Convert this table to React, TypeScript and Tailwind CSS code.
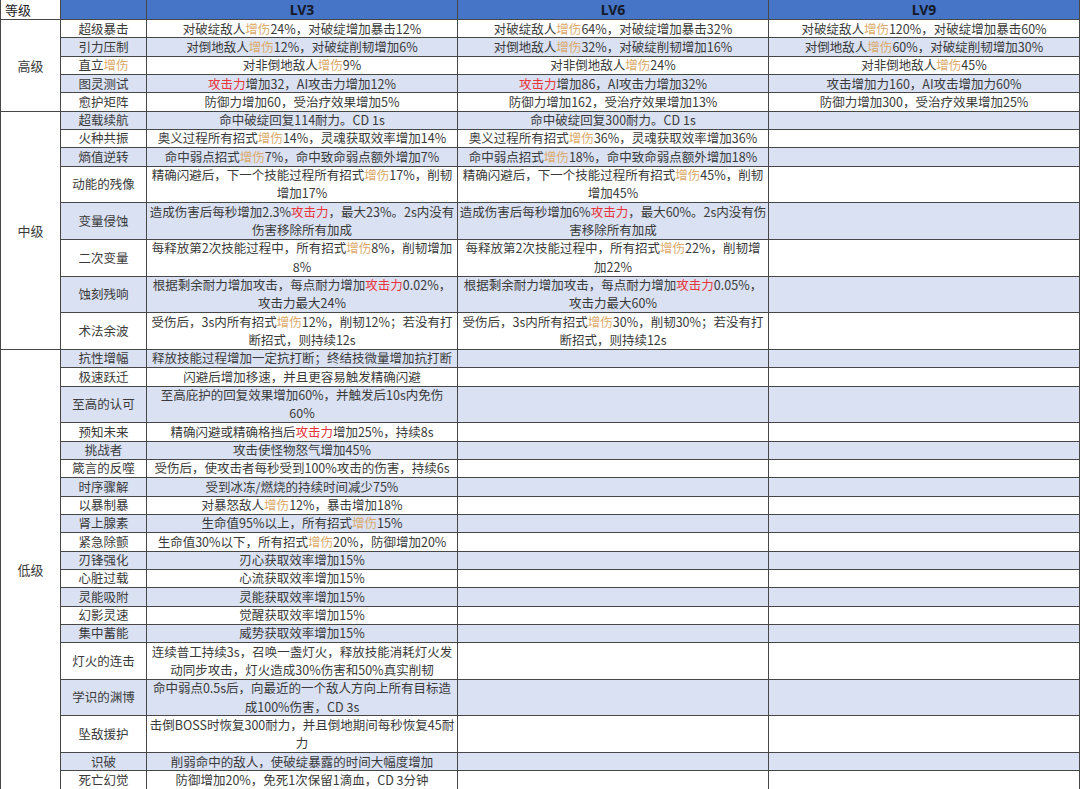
import React from "react";

type Row = { name: string; lines: 1 | 2; v: [string, string, string] };

const high: Row[] = [
  { name: "超级暴击", lines: 1, v: ["对破绽敌人{增伤}24%，对破绽增加暴击12%", "对破绽敌人{增伤}64%，对破绽增加暴击32%", "对破绽敌人{增伤}120%，对破绽增加暴击60%"] },
  { name: "引力压制", lines: 1, v: ["对倒地敌人{增伤}12%，对破绽削韧增加6%", "对倒地敌人{增伤}32%，对破绽削韧增加16%", "对倒地敌人{增伤}60%，对破绽削韧增加30%"] },
  { name: "直立{增伤}", lines: 1, v: ["对非倒地敌人{增伤}9%", "对非倒地敌人{增伤}24%", "对非倒地敌人{增伤}45%"] },
  { name: "图灵测试", lines: 1, v: ["[攻击力]增加32，AI攻击力增加12%", "[攻击力]增加86，AI攻击力增加32%", "攻击增加力160，AI攻击增加力60%"] },
  { name: "愈护矩阵", lines: 1, v: ["防御力增加60，受治疗效果增加5%", "防御力增加162，受治疗效果增加13%", "防御力增加300，受治疗效果增加25%"] },
];

const mid: Row[] = [
  { name: "超载续航", lines: 1, v: ["命中破绽回复114耐力。CD 1s", "命中破绽回复300耐力。CD 1s", ""] },
  { name: "火种共振", lines: 1, v: ["奥义过程所有招式{增伤}14%，灵魂获取效率增加14%", "奥义过程所有招式{增伤}36%，灵魂获取效率增加36%", ""] },
  { name: "熵值逆转", lines: 1, v: ["命中弱点招式{增伤}7%，命中致命弱点额外增加7%", "命中弱点招式{增伤}18%，命中致命弱点额外增加18%", ""] },
  { name: "动能的残像", lines: 2, v: ["精确闪避后，下一个技能过程所有招式{增伤}17%，削韧|增加17%", "精确闪避后，下一个技能过程所有招式{增伤}45%，削韧|增加45%", ""] },
  { name: "变量侵蚀", lines: 2, v: ["造成伤害后每秒增加2.3%[攻击力]，最大23%。2s内没有|伤害移除所有加成", "造成伤害后每秒增加6%[攻击力]，最大60%。2s内没有伤|害移除所有加成", ""] },
  { name: "二次变量", lines: 2, v: ["每释放第2次技能过程中，所有招式{增伤}8%，削韧增加|8%", "每释放第2次技能过程中，所有招式{增伤}22%，削韧增|加22%", ""] },
  { name: "蚀刻残响", lines: 2, v: ["根据剩余耐力增加攻击，每点耐力增加[攻击力]0.02%，|攻击力最大24%", "根据剩余耐力增加攻击，每点耐力增加[攻击力]0.05%，|攻击力最大60%", ""] },
  { name: "术法余波", lines: 2, v: ["受伤后，3s内所有招式{增伤}12%，削韧12%；若没有打|断招式，则持续12s", "受伤后，3s内所有招式{增伤}30%，削韧30%；若没有打|断招式，则持续12s", ""] },
];

const low: Row[] = [
  { name: "抗性增幅", lines: 1, v: ["释放技能过程增加一定抗打断；终结技微量增加抗打断", "", ""] },
  { name: "极速跃迁", lines: 1, v: ["闪避后增加移速，并且更容易触发精确闪避", "", ""] },
  { name: "至高的认可", lines: 2, v: ["至高庇护的回复效果增加60%，并触发后10s内免伤|60%", "", ""] },
  { name: "预知未来", lines: 1, v: ["精确闪避或精确格挡后[攻击力]增加25%，持续8s", "", ""] },
  { name: "挑战者", lines: 1, v: ["攻击使怪物怒气增加45%", "", ""] },
  { name: "箴言的反噬", lines: 1, v: ["受伤后，使攻击者每秒受到100%攻击的伤害，持续6s", "", ""] },
  { name: "时序骤解", lines: 1, v: ["受到冰冻/燃烧的持续时间减少75%", "", ""] },
  { name: "以暴制暴", lines: 1, v: ["对暴怒敌人{增伤}12%，暴击增加18%", "", ""] },
  { name: "肾上腺素", lines: 1, v: ["生命值95%以上，所有招式{增伤}15%", "", ""] },
  { name: "紧急除颤", lines: 1, v: ["生命值30%以下，所有招式{增伤}20%，防御增加20%", "", ""] },
  { name: "刃锋强化", lines: 1, v: ["刃心获取效率增加15%", "", ""] },
  { name: "心脏过载", lines: 1, v: ["心流获取效率增加15%", "", ""] },
  { name: "灵能吸附", lines: 1, v: ["灵能获取效率增加15%", "", ""] },
  { name: "幻影灵速", lines: 1, v: ["觉醒获取效率增加15%", "", ""] },
  { name: "集中蓄能", lines: 1, v: ["威势获取效率增加15%", "", ""] },
  { name: "灯火的连击", lines: 2, v: ["连续普工持续3s，召唤一盏灯火，释放技能消耗灯火发|动同步攻击，灯火造成30%伤害和50%真实削韧", "", ""] },
  { name: "学识的渊博", lines: 2, v: ["命中弱点0.5s后，向最近的一个敌人方向上所有目标造|成100%伤害，CD 3s", "", ""] },
  { name: "坠敌援护", lines: 2, v: ["击倒BOSS时恢复300耐力，并且倒地期间每秒恢复45耐|力", "", ""] },
  { name: "识破", lines: 1, v: ["削弱命中的敌人，使破绽暴露的时间大幅度增加", "", ""] },
  { name: "死亡幻觉", lines: 1, v: ["防御增加20%，免死1次保留1滴血，CD 3分钟", "", ""] },
];

function Rich({ text }: { text: string }) {
  const parts = text.split(/(\{[^}]+\}|\[[^\]]+\])/).filter((p) => p !== "");
  return (
    <>
      {parts.map((p, i) => {
        if (p.startsWith("{")) return <span key={i} className="text-[#dcaa6c]">{p.slice(1, -1)}</span>;
        if (p.startsWith("[")) return <span key={i} className="text-[#e8343a]">{p.slice(1, -1)}</span>;
        return <span key={i}>{p}</span>;
      })}
    </>
  );
}

function Cell({ text, className }: { text: string; className: string }) {
  const lines = text === "" ? [] : text.split("|");
  return (
    <div className={`flex flex-col items-center justify-center overflow-hidden border-r border-b border-[#474747] ${className}`}>
      {lines.map((l, i) => (
        <div key={i} className="whitespace-nowrap leading-[18.3px]">
          <Rich text={l} />
        </div>
      ))}
    </div>
  );
}

function Tier({ label, rows, startIndex }: { label: string; rows: Row[]; startIndex: number }) {
  return (
    <div className="flex">
      <div className="flex w-[60px] shrink-0 items-center justify-center border-r border-b border-[#474747] bg-white text-[13px]">
        {label}
      </div>
      <div className="flex flex-col">
        {rows.map((r, i) => {
          const blue = (startIndex + i) % 2 === 1;
          const bg = blue ? "bg-[#d9e1f3]" : "bg-white";
          const h = r.lines === 2 ? "h-[36.67px]" : "h-[18.33px]";
          return (
            <div key={r.name} className={`flex ${h} ${bg}`}>
              <Cell text={r.name} className="w-[86px] shrink-0" />
              <Cell text={r.v[0]} className="w-[311px] shrink-0" />
              <Cell text={r.v[1]} className="w-[311px] shrink-0" />
              <Cell text={r.v[2]} className="w-[311px] shrink-0" />
            </div>
          );
        })}
      </div>
    </div>
  );
}

export default function App() {
  return (
    <div className="h-[789px] w-[1080px] overflow-hidden border-l border-[#474747] bg-white font-['Noto_Sans_CJK_SC','Noto_Sans',sans-serif] text-[12.5px] text-[#3a3a3a]">
      <div className="flex h-[20px]">
        <div className="flex w-[60px] shrink-0 items-center border-r border-b border-[#474747] bg-white pl-[4px] text-[13px] text-[#222]">
          等级
        </div>
        <div className="w-[86px] shrink-0 border-r border-b border-[#474747] bg-[#4674c6]" />
        {["LV3", "LV6", "LV9"].map((t) => (
          <div
            key={t}
            className="flex w-[311px] shrink-0 items-center justify-center border-r border-b border-[#474747] bg-[#4674c6] font-['Noto_Sans','Liberation_Sans',sans-serif] text-[14px] font-bold text-[#141a2a]"
          >
            {t}
          </div>
        ))}
      </div>
      <Tier label="高级" rows={high} startIndex={0} />
      <Tier label="中级" rows={mid} startIndex={5} />
      <Tier label="低级" rows={low} startIndex={13} />
    </div>
  );
}
